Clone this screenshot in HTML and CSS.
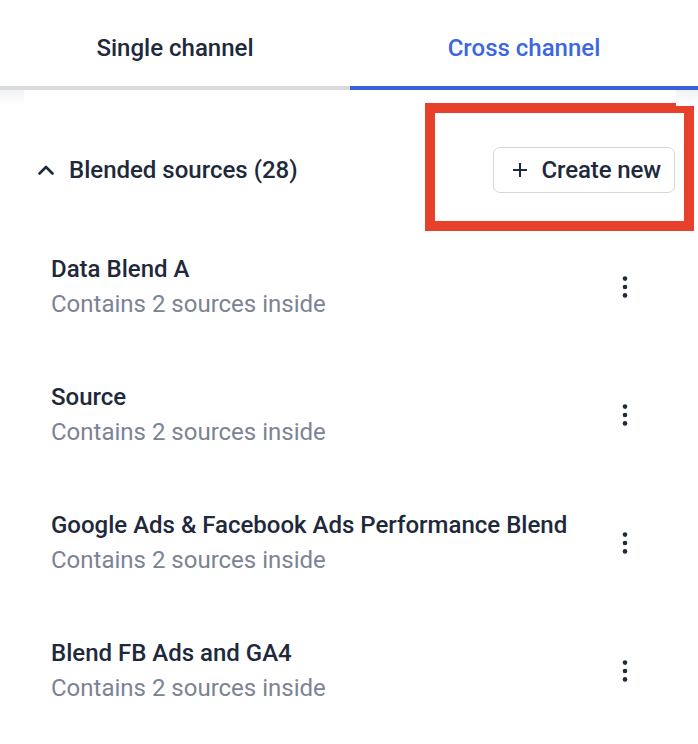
FILE: index.html
```html
<!DOCTYPE html>
<html lang="en">
<head>
<meta charset="utf-8">
<title>Blended sources</title>
<link rel="stylesheet" href="styles.css">
</head>
<body>
<div class="panel">
  <nav class="tabs">
    <div class="tab">Single channel</div>
    <div class="tab tab-active">Cross channel</div>
  </nav>
  <section class="content">
    <div class="section-head">
      <div class="section-title">
        <svg class="chevron" width="16" height="10" viewBox="0 0 16 10"><path d="M1.5 8.5 L8 2 L14.5 8.5" fill="none" stroke="#1e293b" stroke-width="2.6" stroke-linecap="round" stroke-linejoin="round"/></svg>
        <span>Blended sources (28)</span>
      </div>
      <button class="btn-create">
        <svg width="14" height="14" viewBox="0 0 14 14"><path d="M7 0 V14 M0 7 H14" stroke="#1e293b" stroke-width="2"/></svg>
        <span>Create new</span>
      </button>
      <div class="highlight"></div>
    </div>
    <ul class="list">
      <li class="item">
        <div class="item-text">
          <div class="item-title">Data Blend A</div>
          <div class="item-sub">Contains 2 sources inside</div>
        </div>
        <svg class="kebab" width="24" height="24" viewBox="0 0 24 24"><circle cx="12" cy="3.6" r="2.3"/><circle cx="12" cy="12" r="2.3"/><circle cx="12" cy="20.4" r="2.3"/></svg>
      </li>
      <li class="item">
        <div class="item-text">
          <div class="item-title">Source</div>
          <div class="item-sub">Contains 2 sources inside</div>
        </div>
        <svg class="kebab" width="24" height="24" viewBox="0 0 24 24"><circle cx="12" cy="3.6" r="2.3"/><circle cx="12" cy="12" r="2.3"/><circle cx="12" cy="20.4" r="2.3"/></svg>
      </li>
      <li class="item">
        <div class="item-text">
          <div class="item-title">Google Ads &amp; Facebook Ads Performance Blend</div>
          <div class="item-sub">Contains 2 sources inside</div>
        </div>
        <svg class="kebab" width="24" height="24" viewBox="0 0 24 24"><circle cx="12" cy="3.6" r="2.3"/><circle cx="12" cy="12" r="2.3"/><circle cx="12" cy="20.4" r="2.3"/></svg>
      </li>
      <li class="item">
        <div class="item-text">
          <div class="item-title">Blend FB Ads and GA4</div>
          <div class="item-sub">Contains 2 sources inside</div>
        </div>
        <svg class="kebab" width="24" height="24" viewBox="0 0 24 24"><circle cx="12" cy="3.6" r="2.3"/><circle cx="12" cy="12" r="2.3"/><circle cx="12" cy="20.4" r="2.3"/></svg>
      </li>
    </ul>
  </section>
</div>
</body>
</html>
```

FILE: styles.css
```css
* { box-sizing: border-box; }

html, body {
  margin: 0;
  padding: 0;
  background: #ffffff;
}

body {
  font-family: Roboto, "Liberation Sans", sans-serif;
  font-size: 24px;
  color: #1e293b;
  overflow: hidden;
}

.panel {
  width: 698px;
  height: 744px;
}

.tabs {
  display: grid;
  grid-template-columns: 350px 348px;
}

.tab {
  height: 90px;
  padding-top: 9px;
  display: flex;
  align-items: center;
  justify-content: center;
  font-weight: 500;
  color: #1e293b;
  border-bottom: 4px solid #d9dadd;
}

.tab-active {
  color: #3d66e1;
  border-bottom-color: #3a61dc;
}

.content {
  position: relative;
  padding-top: 57px;
}

.content::before,
.content::after {
  content: "";
  position: absolute;
  top: 0;
  width: 24px;
  height: 16px;
  background: linear-gradient(to bottom, #f1f2f4, #ffffff);
}

.content::before { left: 0; }
.content::after { right: 0; width: 22px; }

.section-head {
  position: relative;
  display: flex;
  align-items: center;
  justify-content: space-between;
  padding: 0 23px 0 38px;
  height: 46px;
}

.section-title {
  display: flex;
  align-items: center;
  gap: 15px;
  font-weight: 500;
}

.chevron { display: block; }

.btn-create {
  display: flex;
  align-items: center;
  gap: 14px;
  height: 46px;
  padding: 0 13px 0 19px;
  background: #fff;
  border: 1px solid #d6d8dd;
  border-radius: 7px;
  font-family: inherit;
  font-size: 24px;
  font-weight: 500;
  letter-spacing: -0.1px;
  color: #1e293b;
}

.btn-create svg { display: block; }

.highlight {
  position: absolute;
  left: 425px;
  top: -44px;
  width: 269px;
  height: 128px;
  border: 10px solid #e8412b;
  pointer-events: none;
}

.list {
  list-style: none;
  margin: 59px 0 0;
  padding: 0;
  display: flex;
  flex-direction: column;
  gap: 58px;
}

.item {
  display: flex;
  align-items: center;
  justify-content: space-between;
  padding: 0 61px 0 51px;
}

.item-title {
  line-height: 35px;
  font-weight: 500;
  color: #1e293b;
}

.item-sub {
  line-height: 35px;
  color: #7b8494;
}

.kebab {
  display: block;
  fill: #1e293b;
}
```
